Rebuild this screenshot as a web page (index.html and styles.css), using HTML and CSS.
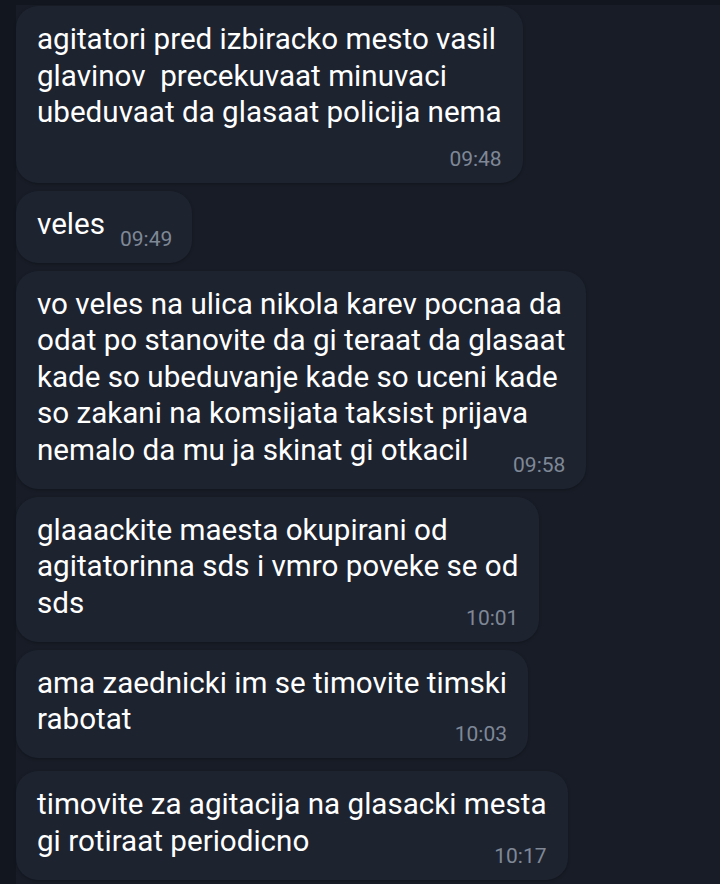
FILE: index.html
```html
<!DOCTYPE html>
<html lang="mk">
<head>
    <meta charset="UTF-8">
    <meta name="viewport" content="width=device-width, initial-scale=1.0">
    <title>Chat</title>
    <link rel="stylesheet" href="styles.css">
</head>
<body>
    <div class="chat">
        <div class="bubble">
            <div class="text">agitatori pred izbiracko mesto vasil<br>glavinov&nbsp; precekuvaat minuvaci<br>ubeduvaat da glasaat policija nema</div>
            <div class="time time-below">09:48</div>
        </div>

        <div class="bubble short">
            <div class="text">veles<span class="time">09:49</span></div>
        </div>

        <div class="bubble">
            <div class="text">vo veles na ulica nikola karev pocnaa da<br>odat po stanovite da gi teraat da glasaat<br>kade so ubeduvanje kade so uceni kade<br>so zakani na komsijata taksist prijava<br>nemalo da mu ja skinat gi otkacil<span class="time">09:58</span></div>
        </div>

        <div class="bubble">
            <div class="text">glaaackite maesta okupirani od<br>agitatorinna sds i vmro poveke se od<br>sds<span class="time">10:01</span></div>
        </div>

        <div class="bubble">
            <div class="text">ama zaednicki im se timovite timski<br>rabotat<span class="time">10:03</span></div>
        </div>

        <div class="bubble last">
            <div class="text">timovite za agitacija na glasacki mesta<br>gi rotiraat periodicno<span class="time">10:17</span></div>
        </div>
    </div>
</body>
</html>
```

FILE: styles.css
```css
html, body {
    margin: 0;
    height: 100%;
}

body {
    background-color: #12161f;
    font-family: Roboto, "Noto Sans", Arial, sans-serif;
    overflow: hidden;
}

.chat {
    display: flex;
    flex-direction: column;
    align-items: flex-start;
    gap: 8px;
    margin: 5px 0 0 16px;
    padding-top: 1px;
    min-height: 100%;
    background-color: #171c26;
}

.bubble {
    background-color: #1e2330;
    border-radius: 22px;
    padding: 15px 21px 12px 21px;
    color: #ffffff;
    box-shadow: 0 1px 3px rgba(0, 0, 0, 0.25);
}

.text {
    display: flow-root;
    font-size: 29.6px;
    line-height: 36.5px;
    white-space: nowrap;
}

.time {
    float: right;
    margin-left: 15px;
    margin-top: 21px;
    font-size: 21px;
    line-height: 24px;
    color: #7f8896;
}

.time-below {
    float: none;
    margin-top: 16px;
    text-align: right;
}

.short {
    padding-right: 20px;
}

.last {
    margin-top: 5px;
}
```
